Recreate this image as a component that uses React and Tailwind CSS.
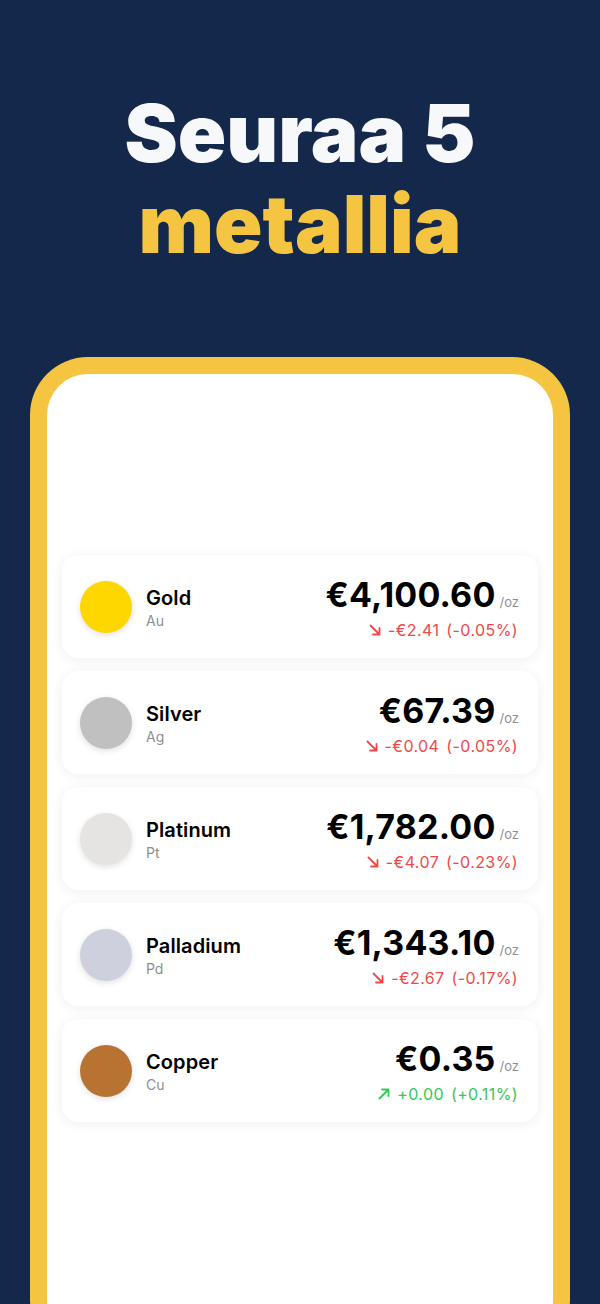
import React from "react";

const metals = [
  { name: "Gold", symbol: "Au", color: "bg-[#ffd700]", price: "€4,100.60", change: "-€2.41", pct: "(-0.05%)", up: false },
  { name: "Silver", symbol: "Ag", color: "bg-[#c0c0c0]", price: "€67.39", change: "-€0.04", pct: "(-0.05%)", up: false },
  { name: "Platinum", symbol: "Pt", color: "bg-[#e5e4e2]", price: "€1,782.00", change: "-€4.07", pct: "(-0.23%)", up: false },
  { name: "Palladium", symbol: "Pd", color: "bg-[#ced0de]", price: "€1,343.10", change: "-€2.67", pct: "(-0.17%)", up: false },
  { name: "Copper", symbol: "Cu", color: "bg-[#b87333]", price: "€0.35", change: "+0.00", pct: "(+0.11%)", up: true },
];

// small trend arrow, corner at bottom-right (down) or top-right (up)
const TrendArrow = ({ up }) => (
  <svg width="12" height="12" viewBox="0 0 12 12" fill="none" stroke="currentColor" strokeWidth="1.8" strokeLinecap="round" strokeLinejoin="round">
    {up ? (
      <path d="M1.5 10.5 L10.5 1.5 M4 1.5 H10.5 V8" />
    ) : (
      <path d="M1.5 1.5 L10.5 10.5 M10.5 4 V10.5 H4" />
    )}
  </svg>
);

const MetalCard = ({ metal }) => (
  <div className="flex h-[103px] items-center justify-between rounded-[16px] bg-white pl-[18px] pr-[19px] shadow-[0_2px_12px_rgba(0,0,0,0.07)]">
    <div className="flex items-center gap-[14px]">
      <div className={`h-[52px] w-[52px] rounded-full ${metal.color} shadow-[0_2px_6px_rgba(0,0,0,0.12)]`} />
      <div className="flex flex-col pt-[2px]">
        <span className="text-[20px] font-semibold leading-[24px] tracking-[0.1px] text-black">{metal.name}</span>
        <span className="mt-[2px] text-[14px] leading-[18px] text-[#8e8e93]">{metal.symbol}</span>
      </div>
    </div>
    <div className="flex flex-col items-end pt-[3px]">
      <div className="flex items-baseline gap-[4px]">
        <span className="text-[34px] font-bold leading-[38px] tracking-[0.2px] text-black">{metal.price}</span>
        <span className="text-[13px] text-[#8e8e93]">/oz</span>
      </div>
      <div
        className={`mt-[6px] flex items-center gap-[7px] pr-[1px] text-[16px] leading-[20px] tracking-[0.4px] ${
          metal.up ? "text-[#34c759]" : "text-[#f04848]"
        }`}
      >
        <TrendArrow up={metal.up} />
        <span>{metal.change}</span>
        <span>{metal.pct}</span>
      </div>
    </div>
  </div>
);

export default function App() {
  return (
    <div
      className="flex h-[1304px] w-[600px] flex-col items-center overflow-hidden bg-[#13284a]"
      style={{ fontFamily: "Inter, 'Noto Sans', sans-serif" }}
    >
      <h1 className="pt-[87px] text-center text-[80px] font-black leading-[91px]">
        <span className="block text-[#f7f8fa]">Seuraa 5</span>
        <span className="block text-[#f5c542]">metallia</span>
      </h1>
      <div className="mt-[88px] h-[1000px] w-[540px] shrink-0 rounded-[58px] border-[17px] border-b-0 border-[#f5c542] bg-white">
        <div className="flex flex-col gap-[13px] px-[15px] pt-[181px]">
          {metals.map((m) => (
            <MetalCard key={m.name} metal={m} />
          ))}
        </div>
      </div>
    </div>
  );
}
